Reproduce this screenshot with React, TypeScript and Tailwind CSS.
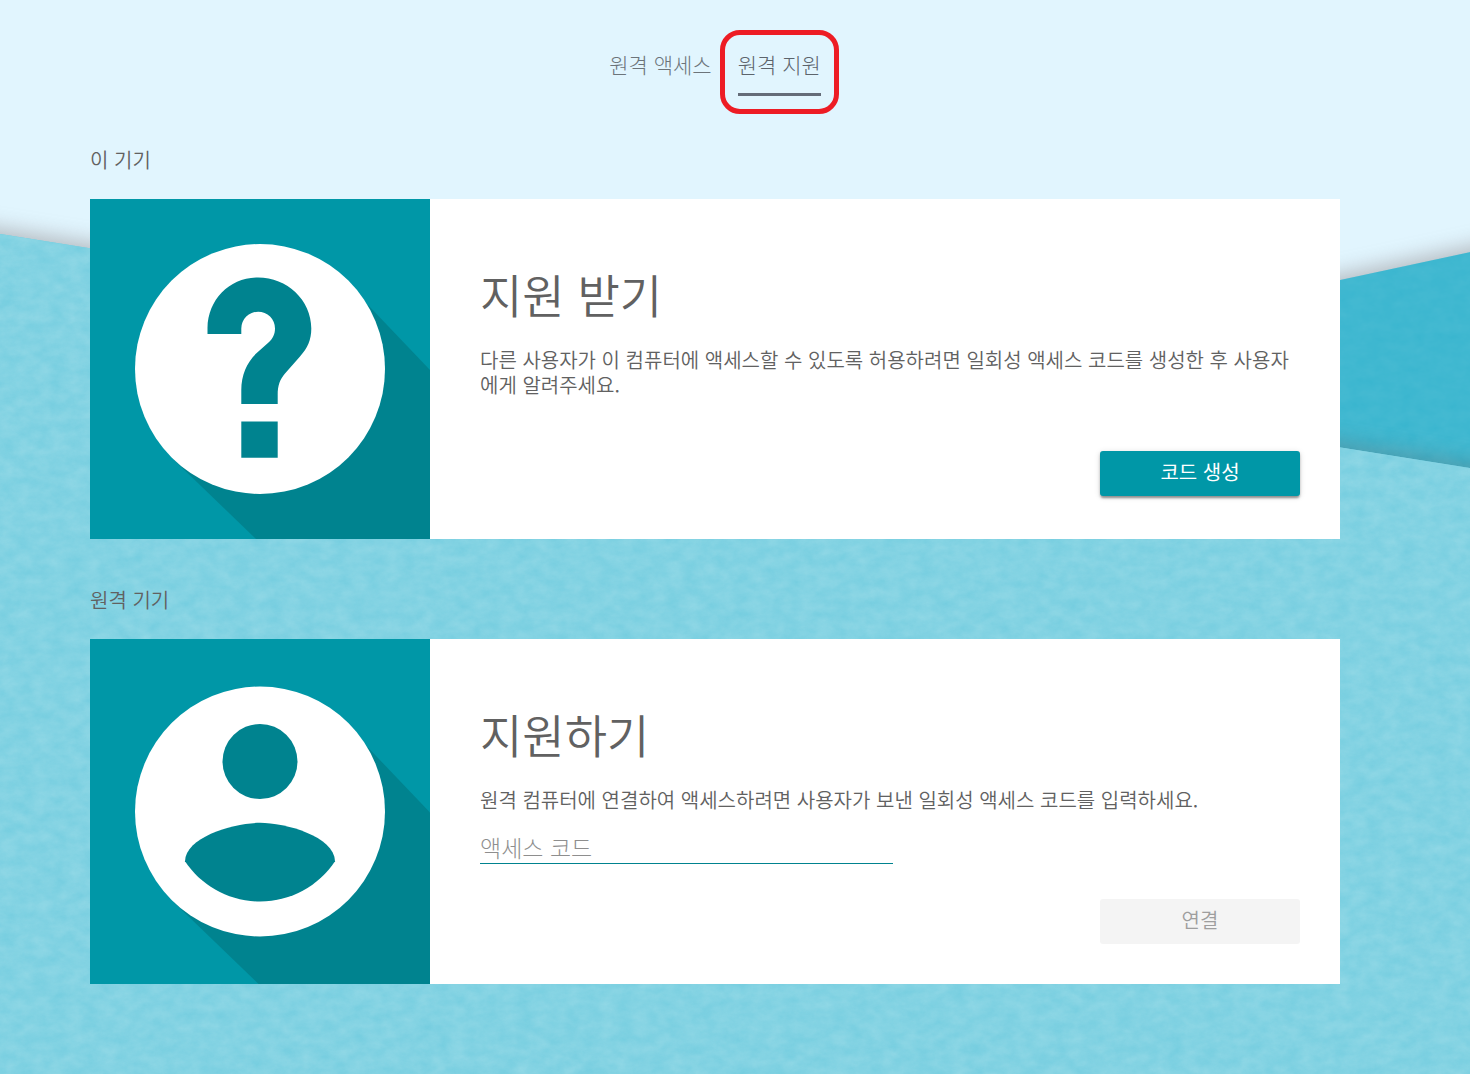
import { useState, type ReactNode } from "react";
import clsx from "clsx";

const TABS = [
  { id: "access", label: "원격 액세스" },
  { id: "support", label: "원격 지원" },
];

export default function App() {
  const [tab, setTab] = useState("support");
  const [code, setCode] = useState("");

  return (
    <div
      lang="ko"
      className="relative isolate min-h-screen overflow-hidden bg-[#e1f5fe] pr-[130px] pb-[90px] pl-[90px] font-['Noto_Sans_CJK_KR',sans-serif] text-xl leading-[25px] font-[350] text-[#616161]"
    >
      <PaperBackground />

      <nav className="flex justify-center gap-[26px] pt-[49px] pb-[3px]">
        {TABS.map((t) => (
          <button
            key={t.id}
            onClick={() => setTab(t.id)}
            className={clsx(
              "relative border-b-[3px] pb-[13px] text-[21px] leading-[31px] font-light",
              tab === t.id ? "border-[#646c78] text-[#5c646c]" : "border-transparent text-[#6c747a]"
            )}
          >
            {t.label}
            {tab === t.id && (
              <span className="absolute -top-[19px] -right-[18px] -bottom-[21px] -left-[18px] rounded-[20px] border-5 border-[#ed1c24]" />
            )}
          </button>
        ))}
      </nav>

      <main>
        <Section label="이 기기" art={<QuestionArt />}>
          <h2 className="text-[46px] leading-[60px]">지원 받기</h2>
          <p className="mt-6">
            다른 사용자가 이 컴퓨터에 액세스할 수 있도록 허용하려면 일회성 액세스 코드를 생성한 후 사용자에게 알려주세요.
          </p>
          <button className="mt-[54px] mb-[43px] h-[45px] w-[200px] self-end rounded-[3px] bg-[#0097a7] pb-1 font-normal text-white shadow-[0_3px_2px_-1px_rgba(0,0,0,0.25),0_2px_3px_rgba(0,0,0,0.2),0_1px_6px_rgba(0,0,0,0.12)]">
            코드 생성
          </button>
        </Section>

        <Section label="원격 기기" art={<PersonArt />}>
          <h2 className="text-[46px] leading-[60px]">지원하기</h2>
          <p className="mt-6">원격 컴퓨터에 연결하여 액세스하려면 사용자가 보낸 일회성 액세스 코드를 입력하세요.</p>
          <input
            type="text"
            aria-label="액세스 코드"
            placeholder="액세스 코드"
            value={code}
            onChange={(e) => setCode(e.target.value)}
            className="mt-5 h-8 w-[413px] border-b border-[#00838f] pb-0.5 text-[23px] font-light outline-none placeholder:text-[#8e8e8e]"
          />
          <button
            disabled={!code}
            className="mt-[35px] mb-10 h-[45px] w-[200px] self-end rounded-[3px] bg-[#0097a7] pb-1 text-white disabled:bg-[#f4f4f4] disabled:text-[#9e9e9e]"
          >
            연결
          </button>
        </Section>
      </main>
    </div>
  );
}

function Section({ label, art, children }: { label: string; art: ReactNode; children: ReactNode }) {
  return (
    <section className="pt-12">
      <h3 className="mb-[27px]">{label}</h3>
      <div className="flex bg-white">
        <div className="relative w-[340px] shrink-0 overflow-hidden bg-[#0097a7]">{art}</div>
        <div className="flex min-w-0 flex-1 flex-col pt-16 pr-10 pl-[50px]">{children}</div>
      </div>
    </section>
  );
}

/* White disc with a long shadow, shared by both tiles */
function Disc({ children }: { children: ReactNode }) {
  return (
    <svg viewBox="0 0 340 340" className="absolute size-full overflow-visible" aria-hidden="true">
      <path d="M278 106L340 171L400 234V400H229L166 340L84 261Z" fill="#00838f" />
      <circle cx="170" cy="170" r="125" fill="#fff" />
      <g fill="#00838f">{children}</g>
    </svg>
  );
}

function QuestionArt() {
  return (
    <Disc>
      <path d="M117.5 135V129C118 100 140 78.5 168 78.5C197 78.5 221.3 101 221.3 129.5C221.3 141 217.5 149 210 157.5L195 174.5C190 180.5 187.7 186 187.7 196V205H151.3V191C151.3 176 157 163 166.7 154L178.5 143.5C183 139.5 185 135 185 129.5A16.8 16.8 0 0 0 151.3 129.5V135Z" />
      <path d="M151.3 222.5H187.7V258.8H151.3Z" />
    </Disc>
  );
}

function PersonArt() {
  return (
    <Disc>
      <circle cx="170" cy="120" r="37.5" />
      <path d="M170 260c-31.25 0-58.9-16-75-40.25C95.4 194.9 145 181.3 170 181.3s74.6 13.6 75 38.45C228.9 244 201.25 260 170 260z" />
    </Disc>
  );
}

/* Layered paper sheets behind the cards */
function PaperBackground() {
  return (
    <svg
      viewBox="0 0 1470 1074"
      preserveAspectRatio="xMidYMin slice"
      className="absolute inset-0 -z-10 size-full"
      aria-hidden="true"
    >
      <defs>
        <filter id="edge" x="-10%" y="-20%" width="120%" height="140%" colorInterpolationFilters="sRGB">
          <feDropShadow dx="0" dy="-6" stdDeviation="10" floodColor="#6a5858" floodOpacity="0.36" />
        </filter>
        <filter id="grain" x="0" y="0" width="100%" height="100%" colorInterpolationFilters="sRGB">
          <feTurbulence type="fractalNoise" baseFrequency="0.06 0.09" numOctaves="4" seed="8" result="noise" />
          <feColorMatrix
            in="noise"
            type="matrix"
            values="0 0 0 0 0.66  0 0 0 0 0.88  0 0 0 0 0.92  0.6 0 0 0 -0.04"
            result="speckle"
          />
          <feComposite in="speckle" in2="SourceGraphic" operator="in" result="clipped" />
          <feMerge>
            <feMergeNode in="SourceGraphic" />
            <feMergeNode in="clipped" />
          </feMerge>
        </filter>
      </defs>
      <g filter="url(#edge)">
        <path d="M690 420L1510 243.500V520H690Z" fill="#3db7d0" />
      </g>
      <g filter="url(#edge)">
        <path d="M-40 227.500L1510 474.500V1130H-40Z" fill="#76cee0" />
      </g>
      <path d="M0 234L1470 468V1074H0Z" fill="#76cee0" filter="url(#grain)" />
      <path d="M1340 280L1470 252V468L1340 447Z" fill="#2fb2cd" filter="url(#grain)" opacity="0.2" />
    </svg>
  );
}
